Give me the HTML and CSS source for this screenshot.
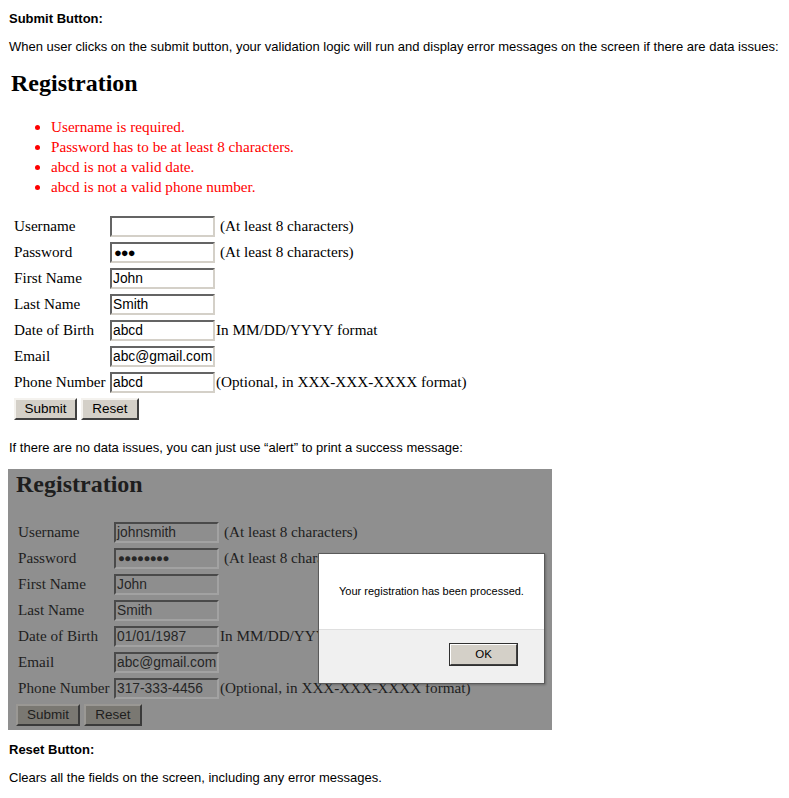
FILE: index.html
```html
<!DOCTYPE html>
<html>
<head>
<meta charset="utf-8">
<title>Registration</title>
<link rel="stylesheet" href="styles.css">
</head>
<body>
<p class="title">Submit Button:</p>
<p class="intro">When user clicks on the submit button, your validation logic will run and display error messages on the screen if there are data issues:</p>

<div class="reg">
  <h2 class="reg-title">Registration</h2>
  <ul class="errors">
    <li>Username is required.</li>
    <li>Password has to be at least 8 characters.</li>
    <li>abcd is not a valid date.</li>
    <li>abcd is not a valid phone number.</li>
  </ul>
  <div class="form">
    <span class="lbl">Username</span><span class="fld"></span><span class="hint gap">(At least 8 characters)</span>
    <span class="lbl">Password</span><span class="fld dots">●●●</span><span class="hint gap">(At least 8 characters)</span>
    <span class="lbl">First Name</span><span class="fld">John</span><span class="hint"></span>
    <span class="lbl">Last Name</span><span class="fld">Smith</span><span class="hint"></span>
    <span class="lbl">Date of Birth</span><span class="fld">abcd</span><span class="hint">In MM/DD/YYYY format</span>
    <span class="lbl">Email</span><span class="fld">abc@gmail.com</span><span class="hint"></span>
    <span class="lbl">Phone Number</span><span class="fld">abcd</span><span class="hint">(Optional, in XXX-XXX-XXXX format)</span>
  </div>
  <div class="buttons">
    <span class="btn btn-submit">Submit</span><span class="btn btn-reset">Reset</span>
  </div>
</div>

<p class="intro after">If there are no data issues, you can just use “alert” to print a success message:</p>

<div class="shot">
  <h2 class="reg-title">Registration</h2>
  <div class="form">
    <span class="lbl">Username</span><span class="fld">johnsmith</span><span class="hint gap">(At least 8 characters)</span>
    <span class="lbl">Password</span><span class="fld dots small">●●●●●●●●</span><span class="hint gap">(At least 8 characters)</span>
    <span class="lbl">First Name</span><span class="fld">John</span><span class="hint"></span>
    <span class="lbl">Last Name</span><span class="fld">Smith</span><span class="hint"></span>
    <span class="lbl">Date of Birth</span><span class="fld">01/01/1987</span><span class="hint">In MM/DD/YYYY format</span>
    <span class="lbl">Email</span><span class="fld">abc@gmail.com</span><span class="hint"></span>
    <span class="lbl">Phone Number</span><span class="fld">317-333-4456</span><span class="hint">(Optional, in XXX-XXX-XXXX format)</span>
  </div>
  <div class="buttons">
    <span class="btn btn-submit">Submit</span><span class="btn btn-reset">Reset</span>
  </div>
  <div class="dialog">
    <div class="dialog-body">Your registration has been processed.</div>
    <div class="dialog-foot"><span class="ok">OK</span></div>
  </div>
</div>

<p class="title reset-title">Reset Button:</p>
<p class="intro">Clears all the fields on the screen, including any error messages.</p>
</body>
</html>
```

FILE: styles.css
```css
html, body {
  margin: 0;
  padding: 0;
  background: #ffffff;
}
body {
  padding: 11px 0 0 9px;
  font-family: "Liberation Sans", Arial, sans-serif;
  font-size: 13px;
  color: #000;
  width: 780px;
}
.title {
  margin: 0;
  font-weight: bold;
  line-height: 16px;
}
.intro {
  margin: 12px 0 0 0;
  line-height: 16px;
}
.intro.after {
  margin-top: 20px;
}
.reset-title {
  margin-top: 12px;
}

.reg, .shot {
  font-family: "Liberation Serif", "Times New Roman", serif;
  font-size: 15.2px;
}
.reg-title {
  margin: 14px 0 0 2px;
  font-size: 24px;
  line-height: 28px;
  font-weight: bold;
}
.errors {
  margin: 20px 0 0 0;
  padding-left: 42px;
  color: #ff0000;
  line-height: 20px;
}
.form {
  display: grid;
  grid-template-columns: 96px 105px auto;
  grid-auto-rows: 26px;
  align-items: center;
  margin: 16px 0 0 5px;
}
.lbl {
  white-space: nowrap;
}
.fld {
  box-sizing: border-box;
  height: 21px;
  width: 105px;
  border: 2px solid;
  border-color: #646464 #d4d0c8 #d4d0c8 #646464;
  background: #fff;
  font-family: "Liberation Sans", Arial, sans-serif;
  font-size: 13.8px;
  line-height: 17px;
  padding-left: 1px;
  white-space: nowrap;
  overflow: hidden;
  margin-top: 1px;
}
.fld.dots {
  font-size: 13px;
  letter-spacing: -1px;
  padding-left: 2px;
}
.fld.dots.small {
  font-size: 11.5px;
  letter-spacing: -0.6px;
}
.hint {
  margin-left: 1px;
  white-space: nowrap;
}
.hint.gap {
  margin-left: 5px;
}
.buttons {
  display: flex;
  gap: 4px;
  margin: 3px 0 0 5px;
}
.btn {
  box-sizing: border-box;
  height: 22px;
  border: 2px solid;
  border-color: #f4f2ee #404040 #404040 #f4f2ee;
  background: #d4d0c8;
  font-family: "Liberation Sans", Arial, sans-serif;
  font-size: 13.5px;
  line-height: 18px;
  text-align: center;
}
.btn-submit { width: 63px; }
.btn-reset { width: 58px; }

.shot {
  position: relative;
  box-sizing: border-box;
  width: 544px;
  height: 261px;
  margin: 13px 0 0 -1px;
  background: #8f8f8f;
  color: #1e1e1e;
  padding: 1px 0 0 4px;
}
.shot .reg-title {
  margin-top: 0;
  margin-left: 4px;
}
.shot .form {
  margin-top: 21px;
  margin-left: 6px;
}
.shot .fld {
  background: #8e8e8e;
  border-color: #4a4a4a #a2a2a2 #a2a2a2 #4a4a4a;
  color: #262626;
}
.shot .buttons {
  margin-top: 3px;
  margin-left: 4px;
}
.shot .btn {
  background: #7a7872;
  border-color: #9a9894 #3a3a3a #3a3a3a #9a9894;
  color: #1e1e1e;
}
.shot .btn-submit { width: 64px; }

.dialog {
  position: absolute;
  left: 310px;
  top: 84px;
  width: 227px;
  height: 131px;
  box-sizing: border-box;
  border: 1px solid #5a5a5a;
  background: #f0f0f0;
  box-shadow: 1px 1px 2px rgba(0,0,0,0.25);
  font-family: "Liberation Sans", Arial, sans-serif;
  font-size: 11px;
  color: #000;
  display: flex;
  flex-direction: column;
}
.dialog-body {
  height: 76px;
  background: #ffffff;
  border-bottom: 1px solid #dfdfdf;
  display: flex;
  align-items: center;
  justify-content: center;
  padding-bottom: 2px;
  box-sizing: border-box;
}
.dialog-foot {
  flex: 1;
  display: flex;
  justify-content: flex-end;
  align-items: flex-start;
  padding: 13px 26px 0 0;
}
.ok {
  box-sizing: border-box;
  width: 69px;
  height: 23px;
  border: 2px solid;
  border-color: #ffffff #404040 #404040 #ffffff;
  background: #d4d0c8;
  outline: 1px solid #303030;
  outline-offset: -1px;
  text-align: center;
  line-height: 19px;
  font-size: 11.5px;
}
```
